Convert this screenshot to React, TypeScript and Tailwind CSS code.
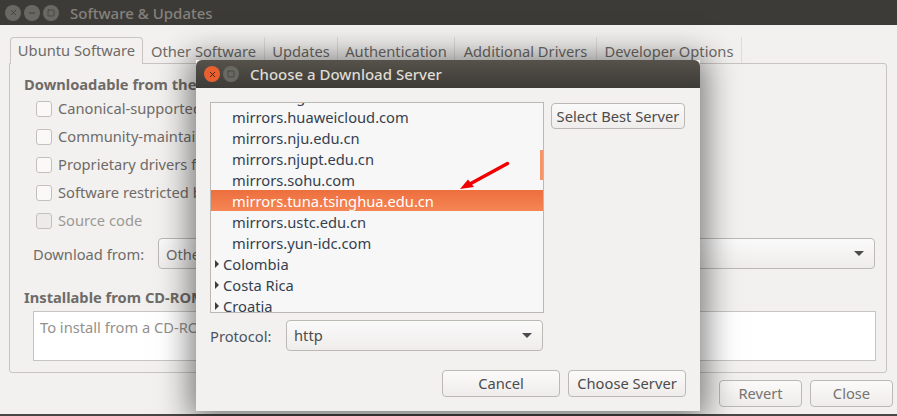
import { Minus, Square, X } from "lucide-react";

const FONT = "font-['Noto_Sans','Liberation_Sans',sans-serif]";

const tabs = [
  { label: "Other Software", width: "w-[122px]" },
  { label: "Updates", width: "w-[73px]" },
  { label: "Authentication", width: "w-[117px]" },
  { label: "Additional Drivers", width: "w-[142px]" },
  { label: "Developer Options", width: "w-[145px]" },
];

const sources = [
  "Canonical-supported free and open-source software (main)",
  "Community-maintained free and open-source software (universe)",
  "Proprietary drivers for devices (restricted)",
  "Software restricted by copyright or legal issues (multiverse)",
];

const servers = [
  "mirrors.dgut.edu.cn",
  "mirrors.huaweicloud.com",
  "mirrors.nju.edu.cn",
  "mirrors.njupt.edu.cn",
  "mirrors.sohu.com",
  "mirrors.tuna.tsinghua.edu.cn",
  "mirrors.ustc.edu.cn",
  "mirrors.yun-idc.com",
];

const countries = ["Colombia", "Costa Rica", "Croatia"];

const WindowDot = ({ children, active }: { children: React.ReactNode; active?: boolean }) => (
  <span
    className={`flex h-[16px] w-[16px] items-center justify-center rounded-full ${
      active ? "bg-[#e8602f] text-[#4a1d0c]" : "bg-[#6a6862] text-[#3d3b37]"
    }`}
  >
    {children}
  </span>
);

const Caret = () => (
  <span className="h-0 w-0 border-x-[5px] border-t-[5px] border-x-transparent border-t-[#4c4c4c]" />
);

const Checkbox = ({ disabled }: { disabled?: boolean }) => (
  <span
    className={`h-[16px] w-[16px] shrink-0 rounded-[3px] border border-[#c4c1bd] ${
      disabled ? "bg-[#ecebe9]" : "bg-[#faf9f8]"
    }`}
  />
);

const Button = ({ label, className, dim }: { label: string; className: string; dim?: boolean }) => (
  <div
    className={`flex items-center justify-center rounded-[4px] border border-[#bcb9b5] bg-gradient-to-b from-[#fbfafa] to-[#efedeb] pb-px ${
      dim ? "text-[#77736f]" : "text-[#4c4c4c]"
    } ${className}`}
  >
    {label}
  </div>
);

export default function App() {
  return (
    <div className={`relative h-[416px] w-[897px] overflow-hidden bg-[#f2f1f0] text-[14.7px] leading-[20px] ${FONT}`}>
      {/* Background window */}
      <div className="flex h-[25px] items-center gap-[3px] bg-[#3d3b37] pl-[5px] text-[#85827c]">
        <WindowDot><X size={9} strokeWidth={2} /></WindowDot>
        <WindowDot><Minus size={10} strokeWidth={2} /></WindowDot>
        <WindowDot><Square size={8} strokeWidth={2} /></WindowDot>
        <span className="ml-[8px] text-[15px] font-medium text-[#85827c]">Software &amp; Updates</span>
      </div>

      <div className="pl-[9px] pr-[10px] pt-[12px] text-[#6f6b67]">
        <div className="flex h-[26px] pl-px">
          <div className="z-10 flex h-[27px] w-[133px] items-center justify-center rounded-t-[4px] border border-b-0 border-[#c8c5c1] bg-[#f2f1f0] pb-[2px]">
            Ubuntu Software
          </div>
          {tabs.map((tab) => (
            <div
              key={tab.label}
              className={`flex items-center justify-center border-r border-[#dedcd9] pt-px ${tab.width}`}
            >
              {tab.label}
            </div>
          ))}
        </div>

        <div className="h-[310px] rounded-b-[3px] rounded-tr-[3px] border border-[#c8c5c1] pl-[14px] pr-[10px] pt-[10px]">
          <div className="font-bold leading-[20px]">Downloadable from the Internet</div>
          <div className="mt-[5px] flex flex-col gap-[8px] pl-[12px]">
            {sources.map((source) => (
              <div key={source} className="flex h-[20px] items-center gap-[6px]">
                <Checkbox />
                <span className="pb-[2px]">{source}</span>
              </div>
            ))}
            <div className="flex h-[20px] items-center gap-[6px] text-[#9c9995]">
              <Checkbox disabled />
              <span className="pb-[2px]">Source code</span>
            </div>
          </div>

          <div className="mr-px mt-[7px] flex items-center pl-[9px]">
            <span className="w-[125px]">Download from:</span>
            <div className="flex h-[31px] flex-1 items-center justify-between rounded-[4px] border border-[#bcb9b5] bg-gradient-to-b from-[#fbfafa] to-[#efedeb] pl-[7px] pr-[10px]">
              <span>Other...</span>
              <Caret />
            </div>
          </div>

          <div className="mt-[18px] font-bold leading-[20px]">Installable from CD-ROM/DVD</div>
          <div className="ml-[9px] mt-[4px] h-[50px] border border-[#c8c5c1] bg-white pl-[6px] pt-[5px] text-[#94918d]">
            To install from a CD-ROM or DVD, insert the medium into the drive.
          </div>
        </div>

        <div className="mt-[7px] flex justify-end gap-[8px]">
          <Button label="Revert" className="h-[27px] w-[83px]" dim />
          <Button label="Close" className="mr-[-6px] h-[27px] w-[83px]" dim />
        </div>
      </div>

      {/* Strip of desktop below the window */}
      <div className="absolute bottom-0 left-0 right-0 h-[2px] bg-[#4a4644]" />

      {/* Modal dialog */}
      <div className="absolute left-[196px] top-[60px] flex h-[351px] w-[504px] flex-col bg-[#f2f1f0] text-[#3c3c3c] shadow-[0_3px_30px_6px_rgba(0,0,0,0.5)]">
        <div className="flex h-[28px] items-center gap-[3px] rounded-t-[6px] bg-gradient-to-b from-[#56524b] to-[#3d3b37] pl-[8px]">
          <WindowDot active><X size={9} strokeWidth={2.5} /></WindowDot>
          <WindowDot><Square size={8} strokeWidth={2} /></WindowDot>
          <span className="ml-[8px] text-[15px] font-medium text-[#dfdbd2]">Choose a Download Server</span>
        </div>

        <div className="flex flex-1 flex-col px-[14px] pt-[14px]">
          <div className="flex items-start">
            <div className="relative h-[211px] w-[334px] overflow-hidden border border-[#bcb9b5] bg-[#f7f7f7]">
              <div className="-mt-[18px] flex flex-col text-[#35404e]">
                {servers.map((server) => (
                  <div
                    key={server}
                    className={`flex h-[21px] items-center pl-[21px] ${
                      server.includes("tuna")
                        ? "bg-gradient-to-b from-[#ec6f3d] to-[#f68555] text-white"
                        : ""
                    }`}
                  >
                    {server}
                  </div>
                ))}
                {countries.map((country) => (
                  <div key={country} className="flex h-[21px] items-center gap-[4px] pl-[4px]">
                    <span className="h-0 w-0 border-y-[4px] border-l-[4px] border-y-transparent border-l-[#3c3c3c]" />
                    <span>{country}</span>
                  </div>
                ))}
              </div>
              {/* Scrollbar thumb */}
              <div className="absolute right-0 top-[47px] h-[30px] w-[3px] bg-[#f4956a]" />
            </div>
            <Button label="Select Best Server" className="ml-[7px] mt-px h-[26px] w-[134px]" />
          </div>

          <div className="mt-[7px] flex items-center">
            <span className="w-[76px] text-[#4a5360]">Protocol:</span>
            <div className="flex h-[31px] w-[257px] items-center justify-between rounded-[4px] border border-[#bcb9b5] bg-gradient-to-b from-[#fbfafa] to-[#efedeb] pb-px pl-[7px] pr-[10px] text-[#4c4c4c]">
              <span>http</span>
              <Caret />
            </div>
          </div>

          <div className="mt-[19px] flex justify-end gap-[8px]">
            <Button label="Cancel" className="h-[27px] w-[118px]" />
            <Button label="Choose Server" className="h-[27px] w-[118px]" />
          </div>
        </div>
      </div>

      {/* Red arrow annotation */}
      <svg className="absolute left-[455px] top-[155px]" width="60" height="40" viewBox="0 0 60 40" fill="none">
        <path d="M52.5 8.5 L14 29.5" stroke="#f00000" strokeWidth="3.5" strokeLinecap="round" />
        <path d="M5 34 L13 24.5 L19 32 Z" fill="#f00000" />
      </svg>
    </div>
  );
}
